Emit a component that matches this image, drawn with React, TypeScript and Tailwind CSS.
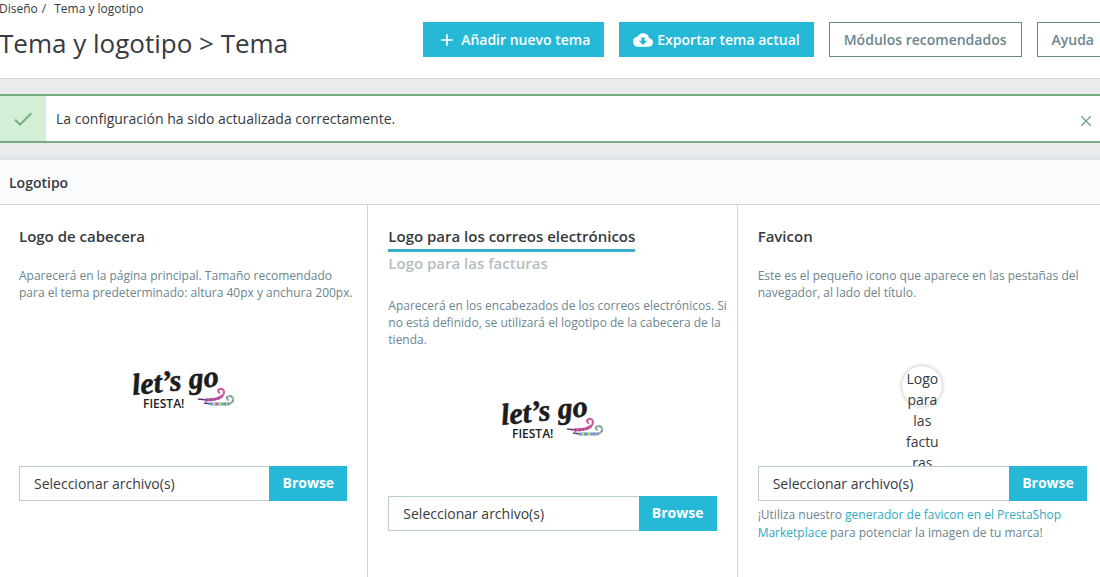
import { ReactNode } from 'react';
import { MdAdd, MdCheck, MdClose, MdCloudDownload } from 'react-icons/md';

const FiestaLogo = () => (
  <svg
    viewBox="0 0 104 50"
    className="h-[50px] w-[104px] shrink-0 overflow-visible"
    role="img"
    aria-label="Let's go fiesta!"
  >
    <text
      x="2"
      y="34"
      transform="rotate(-6 2 34)"
      fontFamily="'Liberation Serif'"
      fontStyle="italic"
      fontWeight="700"
      fontSize="30"
      fill="#1c1c1c"
      stroke="#1c1c1c"
      strokeWidth="0.6"
    >
      let’s go
    </text>
    <text x="12" y="47" fontFamily="'Open Sans', sans-serif" fontWeight="600" fontSize="12" fill="#222">
      FIESTA!
    </text>
    {/* party blowers */}
    <g fill="none">
      <path d="M67 38 L76 39" stroke="#5b2f63" strokeWidth="1.6" />
      <path d="M74 39 C82 39 88 38 91 35" stroke="#c9509a" strokeWidth="3" />
      <path d="M75 39 C82 39 88 38 91 35" stroke="#7d4a96" strokeWidth="3" strokeDasharray="1 3" />
      <path d="M90 36 C95 32 93 27 89 28 C86 29 87 32 89 32" stroke="#d0589c" strokeWidth="2" />
      <path d="M73 42 L81 43" stroke="#5a3c7a" strokeWidth="1.6" />
      <path d="M79 43 L98 43" stroke="#58a8d6" strokeWidth="3" />
      <path d="M82 43 L98 43" stroke="#e9cf5a" strokeWidth="3" strokeDasharray="2 4" />
      <path d="M85 43 L98 43" stroke="#d0589c" strokeWidth="3" strokeDasharray="1 8" />
      <path d="M97 43 C103 42 104 36 99 35 C95 35 95 39 98 39" stroke="#8dbf8a" strokeWidth="2" />
      <path
        d="M97 43 C103 42 104 36 99 35 C95 35 95 39 98 39"
        stroke="#8a8cc4"
        strokeWidth="2"
        strokeDasharray="2 3"
      />
    </g>
  </svg>
);

const FileField = ({ id, label }: { id: string; label: string }) => (
  <div className="flex h-[35px]">
    <label htmlFor={id} className="sr-only">
      {label}
    </label>
    <input
      id={id}
      type="text"
      readOnly
      value="Seleccionar archivo(s)"
      className="min-w-0 flex-1 border border-r-0 border-[#bbcdd2] bg-white px-[14px] text-sm text-[#363a41] outline-none"
    />
    <button type="button" className="w-[78px] bg-[#25b9d7] pb-px text-sm font-bold text-white">
      Browse
    </button>
  </div>
);

interface LogoColumnProps {
  heading: ReactNode;
  help: string;
  preview: ReactNode;
  children: ReactNode;
}

const LogoColumn = ({ heading, help, preview, children }: LogoColumnProps) => (
  <section className="border-r border-[#d3d8db] px-5 pt-5 last:border-r-0">
    {heading}
    <p className="mt-5 -mr-3 min-h-[51px] text-xs leading-[17px] text-[#6c868e]">{help}</p>
    <div className="flex h-[148px] justify-center overflow-hidden pt-[43px]">{preview}</div>
    {children}
  </section>
);

const primaryButton = 'flex h-[35px] items-center bg-[#25b9d7] px-[14px] text-white';
const outlineButton = 'h-[35px] border border-[#6c868e] px-[14px] text-[#6c868e]';
const headingStyle = 'block text-[15px] leading-[22px] font-semibold';

export default function App() {
  return (
    <div className="min-h-screen overflow-hidden bg-white font-['Open_Sans',sans-serif] text-sm text-[#363a41]">
      <div className="-mr-[7px] -ml-px">
        <header className="flex h-[79px] items-start justify-between border-b border-[#d3d8db]">
          <div>
            <nav aria-label="Breadcrumb" className="flex text-xs leading-[18px]">
              <a href="#diseno">Diseño</a>
              <span className="mr-2 ml-1">/</span>
              <a href="#tema">Tema y logotipo</a>
            </nav>
            <h1 className="mt-[7px] text-[26px] leading-9 whitespace-nowrap">Tema y logotipo &gt; Tema</h1>
          </div>
          <div className="-mr-0.5 flex shrink-0 gap-[15px] pt-[22px] font-semibold whitespace-nowrap">
            <button type="button" className={primaryButton}>
              <MdAdd className="mr-1 size-5" />
              Añadir nuevo tema
            </button>
            <button type="button" className={primaryButton}>
              <MdCloudDownload className="mr-1 size-5" />
              Exportar tema actual
            </button>
            <button type="button" className={outlineButton}>
              Módulos recomendados
            </button>
            <button type="button" className={outlineButton}>
              Ayuda
            </button>
          </div>
        </header>

        <div className="bg-[#eaebec] pt-[15px]">
          <div role="alert" className="flex h-[49px] items-stretch border-y-2 border-[#78ab84] bg-white">
            <div className="flex w-[47px] items-center justify-center bg-[#d3f0d6] text-[#78ab84]">
              <MdCheck className="size-6" />
            </div>
            <p className="flex-1 self-center pl-2.5">La configuración ha sido actualizada correctamente.</p>
            <button type="button" aria-label="Cerrar" className="mr-3 pt-1 text-[#78ab84]">
              <MdClose className="size-[18px]" />
            </button>
          </div>

          <div className="h-[17px] bg-linear-to-b from-[#eaebec] from-60% to-[#dfe3e5]" />
        </div>

        <main>
          <h2 className="h-[45px] border-b border-[#d3d8db] bg-[#fafbfc] pl-2.5 leading-[45px] font-semibold">
            Logotipo
          </h2>
          <div className="grid min-h-[372px] grid-cols-3">
            <LogoColumn
              heading={<h3 className={headingStyle}>Logo de cabecera</h3>}
              help="Aparecerá en la página principal. Tamaño recomendado para el tema predeterminado: altura 40px y anchura 200px."
              preview={<FiestaLogo />}
            >
              <FileField id="header-logo" label="Logo de cabecera" />
            </LogoColumn>

            <LogoColumn
              heading={
                <div className="flex flex-col items-start pb-[3px]">
                  <a href="#mail" className={`${headingStyle} border-b-3 border-[#3bafc5] pb-0.5`}>
                    Logo para los correos electrónicos
                  </a>
                  <a href="#invoice" className={`${headingStyle} text-[#b3bec2]`}>
                    Logo para las facturas
                  </a>
                </div>
              }
              help="Aparecerá en los encabezados de los correos electrónicos. Si no está definido, se utilizará el logotipo de la cabecera de la tienda."
              preview={<FiestaLogo />}
            >
              <FileField id="mail-logo" label="Logo para los correos electrónicos" />
            </LogoColumn>

            <LogoColumn
              heading={<h3 className={headingStyle}>Favicon</h3>}
              help="Este es el pequeño icono que aparece en las pestañas del navegador, al lado del título."
              preview={
                <div className="mt-[5px] size-10 rounded-full px-0.5 pt-0.5 text-center leading-[21px] wrap-break-word shadow-[0_0_4px_rgba(0,0,0,0.3)]">
                  Logo para las facturas
                </div>
              }
            >
              <FileField id="favicon" label="Favicon" />
              <p className="mt-[5px] text-xs leading-[18px] text-[#6c868e]">
                ¡Utiliza nuestro{' '}
                <a href="#favicon-generator" className="text-[#30a9c0]">
                  generador de favicon en el PrestaShop Marketplace
                </a>{' '}
                para potenciar la imagen de tu marca!
              </p>
            </LogoColumn>
          </div>
        </main>
      </div>
    </div>
  );
}
